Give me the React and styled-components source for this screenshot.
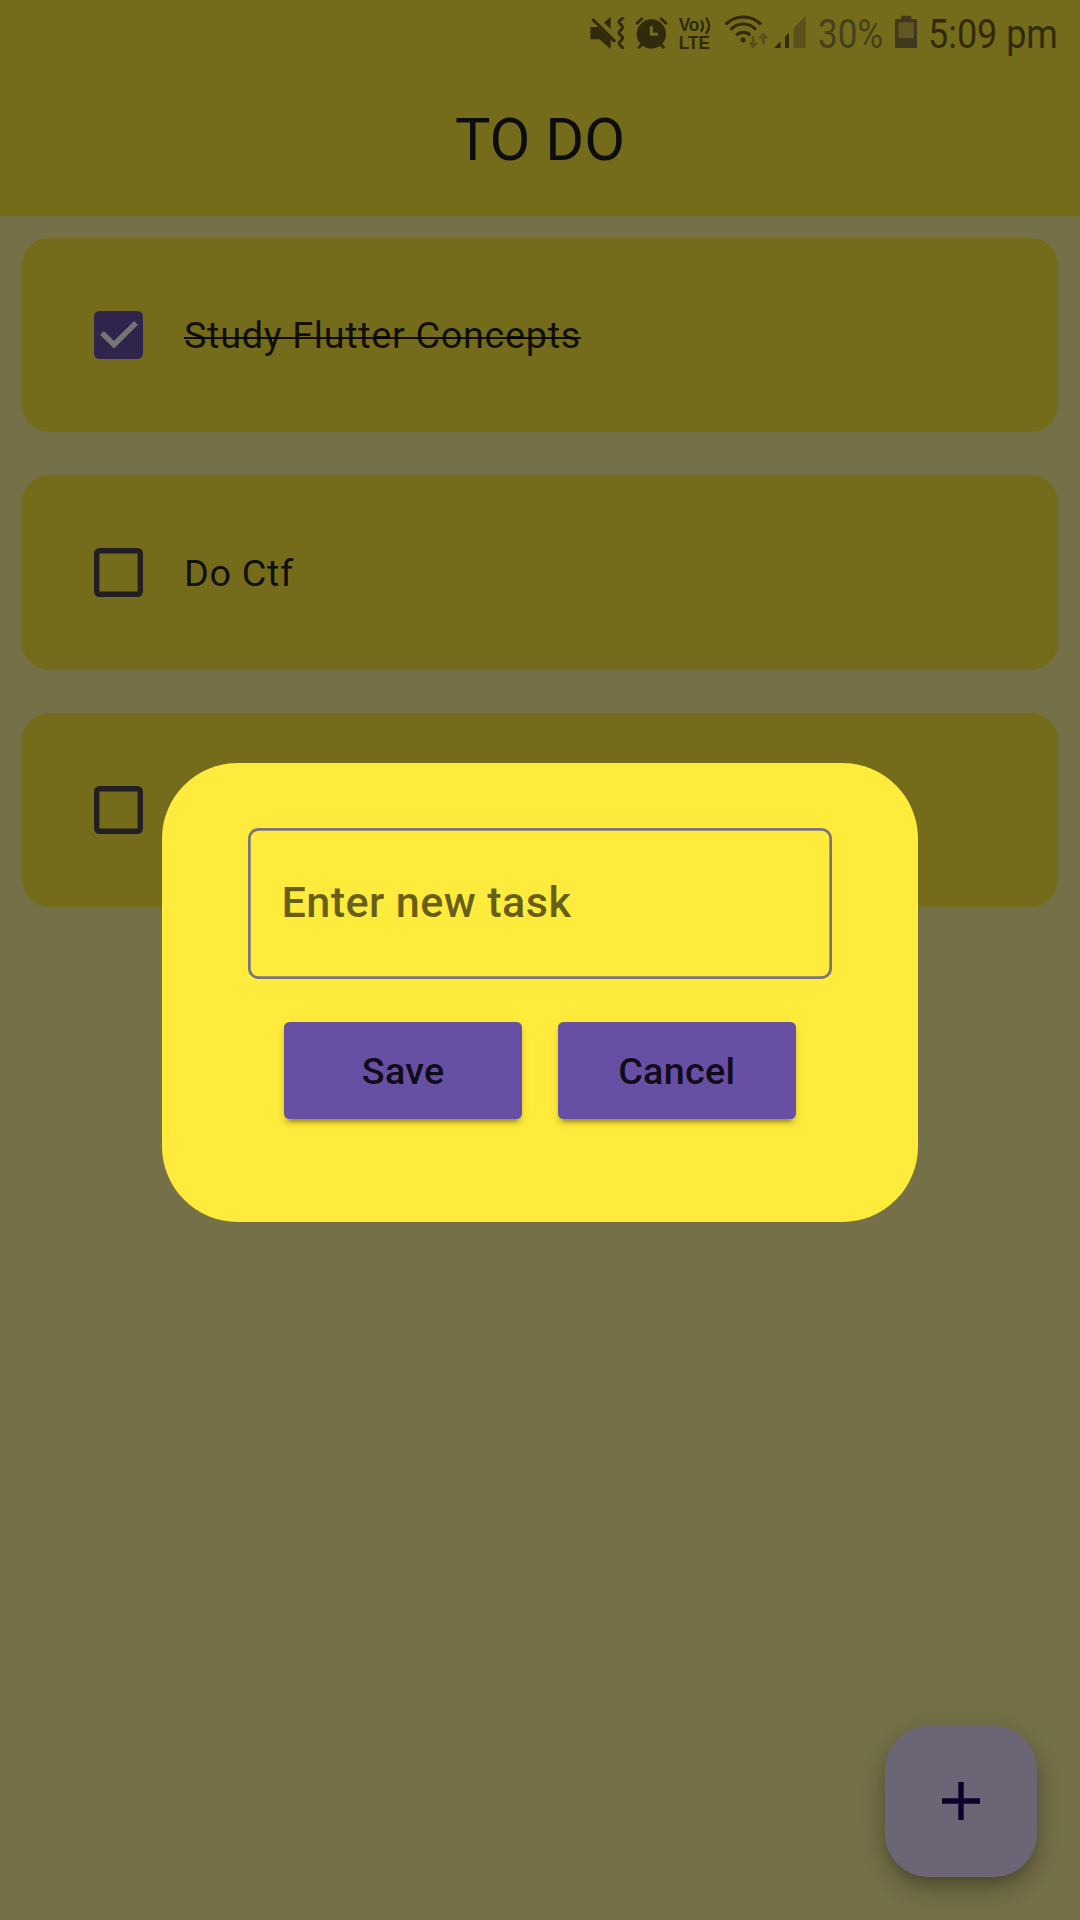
import React from "react";
import styled, { createGlobalStyle } from "styled-components";

const GlobalStyle = createGlobalStyle`
  *, *::before, *::after { box-sizing: border-box; }
  html, body { margin: 0; padding: 0; }
  body { font-family: Roboto, "Liberation Sans", sans-serif; background: #fff59d; }
`;

const Screen = styled.div`
  position: relative;
  width: 1080px;
  height: 1920px;
  overflow: hidden;
  background: #fff59d;
`;

const Header = styled.header`
  height: 216px;
  padding-top: 63px;
  background: #ffeb3b;
  display: flex;
  align-items: center;
  justify-content: center;
`;

const Title = styled.h1`
  margin: 0;
  font-size: 59.4px;
  line-height: 76px;
  font-weight: 400;
  color: #1d1b20;
`;

const TaskList = styled.ul`
  list-style: none;
  margin: 0;
  padding: 22px 21.6px;
  display: flex;
  flex-direction: column;
  gap: 43px;
`;

const TaskCard = styled.li`
  height: 194.4px;
  padding-left: 72.9px;
  border-radius: 27px;
  background: #ffeb3b;
  display: flex;
  align-items: center;
  gap: 40.9px;
`;

const Box = styled.span`
  flex: none;
  display: grid;
  place-items: center;
  width: 48.6px;
  height: 48.6px;
  border-radius: 5.4px;
  background: ${(p) => (p.$checked ? "#6750a4" : "transparent")};
  box-shadow: ${(p) => (p.$checked ? "none" : "inset 0 0 0 5.4px #49454f")};
`;

const TaskLabel = styled.span`
  font-size: 37.8px;
  line-height: 54px;
  letter-spacing: 0.675px;
  color: rgba(0, 0, 0, 0.87);
  background: ${(p) =>
    p.$done ? "linear-gradient(rgba(0,0,0,.87), rgba(0,0,0,.87)) 0 29px / 100% 2px no-repeat" : "none"};
`;

const Fab = styled.button`
  position: absolute;
  right: 43px;
  bottom: 43.2px;
  width: 152px;
  height: 151.2px;
  border: 0;
  padding: 0;
  border-radius: 43.2px;
  background: #eaddff;
  display: grid;
  place-items: center;
  box-shadow: 0 8px 13px -3px rgba(0, 0, 0, 0.2), 0 16px 27px rgba(0, 0, 0, 0.14),
    0 3px 40px rgba(0, 0, 0, 0.12);
`;

const Scrim = styled.div`
  position: absolute;
  inset: 0;
  background: rgba(0, 0, 0, 0.54);
  display: flex;
  justify-content: center;
  align-items: flex-start;
  padding-top: 763px;
`;

const Dialog = styled.section`
  width: 756px;
  height: 459px;
  padding: 65px 86.4px 0;
  border-radius: 75.6px;
  background: #ffeb3b;
  display: flex;
  flex-direction: column;
  gap: 43px;
`;

const Field = styled.div`
  height: 151.2px;
  padding: 0 0 2px 33px;
  border-radius: 10.8px;
  box-shadow: inset 0 0 0 2.7px #79747e;
  display: flex;
  align-items: center;
  font-size: 43.2px;
  line-height: 64px;
  font-weight: 500;
  letter-spacing: 0.4px;
  color: rgba(0, 0, 0, 0.6);
`;

const Actions = styled.div`
  display: flex;
  justify-content: center;
  gap: 36px;
`;

const Action = styled.button`
  width: 237.6px;
  height: 97.2px;
  border: 0;
  padding: 0;
  border-radius: 5.4px;
  background: #6750a4;
  color: rgba(0, 0, 0, 0.87);
  font: 500 37.8px/54px Roboto, "Liberation Sans", sans-serif;
  letter-spacing: 0.27px;
  box-shadow: 0 8px 3px -5px rgba(0, 0, 0, 0.2), 0 5px 5px rgba(0, 0, 0, 0.14),
    0 3px 13px rgba(0, 0, 0, 0.06);
`;

const StatusBar = styled.div`
  position: absolute;
  top: 0;
  left: 0;
  right: 0;
  height: 65px;
  padding-left: 590px;
  display: flex;
  align-items: flex-start;
  color: #312a0b;
`;

const Glyph = styled.svg`
  flex: none;
  display: block;
  margin-top: 16px;
  margin-right: ${(p) => p.$after}px;
  overflow: visible;
`;

const StatusText = styled.span`
  flex: none;
  width: ${(p) => p.$width}px;
  font-size: 40.5px;
  line-height: 48px;
  padding-top: 10px;
  white-space: nowrap;
  color: ${(p) => p.$color};
  transform: scaleX(${(p) => p.$squeeze});
  transform-origin: left center;
`;

const faint = "#58511a";

function StatusIcons() {
  return (
    <>
      <Glyph width="35" height="34" viewBox="60 48 105 102" $after={10}>
        <path
          fill="currentColor"
          d="M64 81H84L122 118V147L88 118H64Q61 118 61 115V84Q61 81 64 81ZM102 68L122 50V87Z"
        />
        <path
          fill="none"
          stroke="currentColor"
          strokeWidth="9"
          d="M67 57L135 125M160 52C156 60 147 60 147 66S158 75 158 82S147 91 147 98S158 107 158 114S147 123 147 129S156 138 160 147"
        />
      </Glyph>
      <Glyph width="32" height="34" viewBox="195 48 96 102" $after={11}>
        <circle cx="244" cy="102" r="44" fill="currentColor" />
        <path
          stroke="currentColor"
          strokeWidth="9"
          d="M199 72L218 54M271 54L290 72M205 145L217 132M271 132L283 145"
        />
        <path fill="none" stroke="#756c1b" strokeWidth="9" d="M244 79V103H264" />
      </Glyph>
      <Glyph width="34" height="34" viewBox="324 48 102 102" $after={12}>
        <g fill="currentColor" fontFamily='"Liberation Sans", sans-serif' fontWeight="700" fontSize="57">
          <text x="326" y="94" textLength="62" lengthAdjust="spacingAndGlyphs">Vo</text>
          <text x="326" y="147" textLength="94" lengthAdjust="spacingAndGlyphs">LTE</text>
        </g>
        <path
          fill="none"
          stroke="currentColor"
          strokeWidth="7"
          d="M393 61Q405 78 393 95M408 53Q427 77 408 101"
        />
      </Glyph>
      <Glyph width="45" height="34" viewBox="462 48 135 102" $after={4}>
        <circle cx="519" cy="120" r="7.5" fill="currentColor" />
        <path
          fill="none"
          stroke="currentColor"
          strokeWidth="9"
          d="M467 73A74 74 0 0 1 573 73M482 89A51 51 0 0 1 558 89M499 106A29 29 0 0 1 541 106"
        />
        <path
          fill="none"
          stroke={faint}
          strokeWidth="8"
          d="M549 108V140M539 128L549 140L560 128M580 133V103M569 115L580 103L591 115"
        />
      </Glyph>
      <Glyph width="33" height="34" viewBox="609 48 99 102" $after={12}>
        <path fill="currentColor" d="M612 144L632 124V144ZM645 110L657 98V144H645Z" />
        <path fill={faint} d="M671 84L707 48V144H671Z" />
      </Glyph>
      <StatusText $width={76.5} $squeeze={0.865} $color="#46401d">30%</StatusText>
      <Glyph width="22" height="34" viewBox="285 48 66 102" $after={11.5}>
        <path
          fill="#403920"
          d="M303 57V50Q303 47 306 47H331Q334 47 334 50V57H347Q351 57 351 61V140Q351 144 347 144H289Q285 144 285 140V61Q285 57 289 57Z"
        />
        <path fill="#605820" d="M295 67H341V114H295Z" />
      </Glyph>
      <StatusText $width={128} $squeeze={0.887} $color="#312b09">5:09 pm</StatusText>
    </>
  );
}

const tasks = [
  { label: "Study Flutter Concepts", done: true },
  { label: "Do Ctf", done: false },
  { label: "", done: false },
];

export default function App() {
  return (
    <Screen>
      <GlobalStyle />
      <Header>
        <Title>TO DO</Title>
      </Header>
      <TaskList>
        {tasks.map((task, i) => (
          <TaskCard key={i}>
            <Box $checked={task.done}>
              {task.done && (
                <svg width="48" height="48" viewBox="0 0 48 48">
                  <path d="M7 22L19 33.6L41 11.8" fill="none" stroke="#fff" strokeWidth="5.4" />
                </svg>
              )}
            </Box>
            <TaskLabel $done={task.done}>{task.label}</TaskLabel>
          </TaskCard>
        ))}
      </TaskList>
      <Fab aria-label="Add task">
        <svg width="38" height="38" viewBox="0 0 38 38">
          <path d="M19 0V38M0 19H38" stroke="#21005d" strokeWidth="5.4" />
        </svg>
      </Fab>
      <Scrim>
        <Dialog>
          <Field>Enter new task</Field>
          <Actions>
            <Action>Save</Action>
            <Action>Cancel</Action>
          </Actions>
        </Dialog>
      </Scrim>
      <StatusBar>
        <StatusIcons />
      </StatusBar>
    </Screen>
  );
}
